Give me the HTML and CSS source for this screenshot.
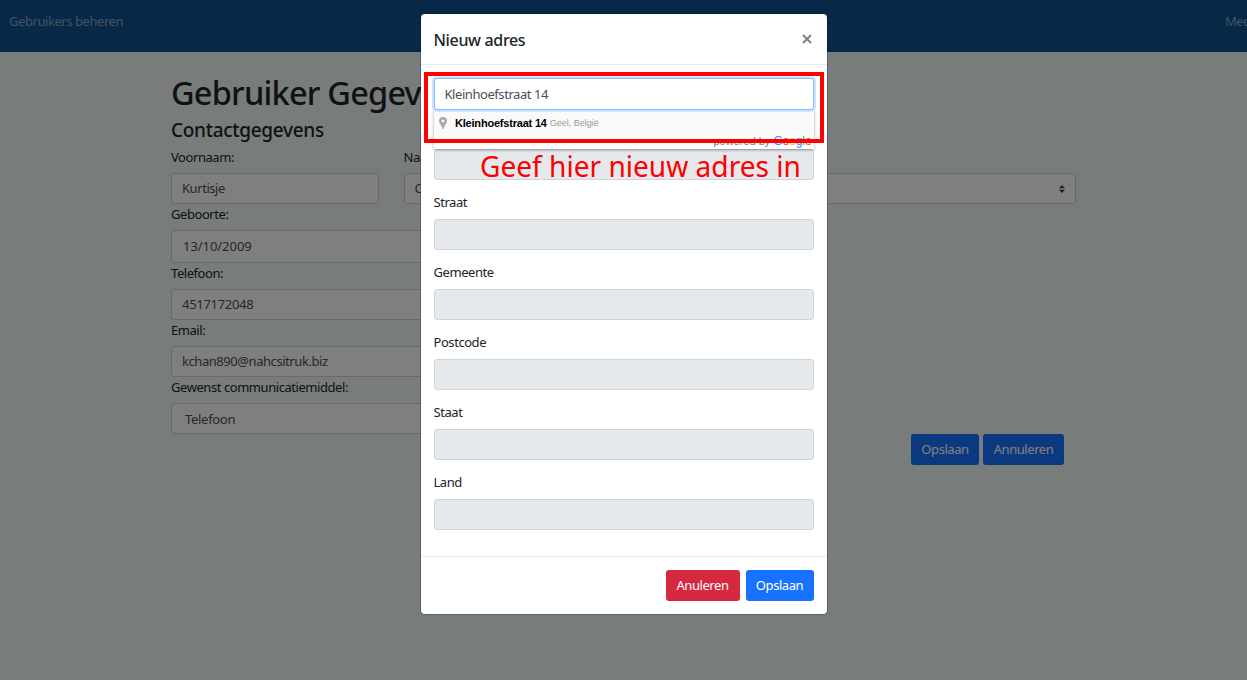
FILE: index.html
```html
<!DOCTYPE html>
<html lang="nl">
<head>
<meta charset="utf-8">
<title>Gebruiker Gegevens</title>
<link rel="stylesheet" href="styles.css">
</head>
<body>
<nav class="navbar"><span>Gebruikers beheren</span><span class="nav-right">Medewerkers</span></nav>
<main class="page">
  <h1>Gebruiker Gegevens</h1>
  <h2>Contactgegevens</h2>
  <div class="row">
    <div><label>Voornaam:</label><div class="control">Kurtisje</div></div>
    <div><label>Naam:</label><div class="control">Chan</div></div>
    <div><label>&nbsp;</label><div class="control select"><svg width="6" height="8" viewBox="0 0 6 8"><path d="M0 3.200 3 0l3 3.200zM0 4.800h6L3 8z" fill="#343a50"/></svg></div></div>
  </div>
  <div class="half">
    <label>Geboorte:</label><div class="control date">13/10/2009</div>
    <label>Telefoon:</label><div class="control phone">4517172048</div>
    <label>Email:</label><div class="control">kchan890@nahcsitruk.biz</div>
    <label>Gewenst communicatiemiddel:</label><div class="control choice">Telefoon</div>
  </div>
  <div class="actions"><span class="btn">Opslaan</span><span class="btn wide">Annuleren</span></div>
</main>
<div class="backdrop">
  <section class="modal">
    <header><h3>Nieuw adres</h3><svg class="close" width="10" height="10" viewBox="0 0 10 10"><path d="m1 1 8 8M9 1 1 9" stroke="#7f7f7f" stroke-width="1.8"/></svg></header>
    <div class="body">
      <div class="control search">Kleinhoefstraat 14</div>
      <div class="suggestions">
        <div class="item"><svg width="8" height="12" viewBox="0 0 8 12"><path fill-rule="evenodd" d="M4 0a4 4 0 0 0-4 4c0 2.400 2.600 3.600 3.400 8h1.200C5.400 7.600 8 6.400 8 4a4 4 0 0 0-4-4zm0 2.500a1.500 1.500 0 1 1 0 3 1.500 1.500 0 0 1 0-3z" fill="#a9a9a9"/></svg><b>Kleinhoefstraat 14</b><small>Geel, België</small></div>
        <div class="powered">powered by <span class="google"><i class="b">G</i><i class="r">o</i><i class="y">o</i><i class="b">g</i><i class="g">l</i><i class="r">e</i></span></div>
      </div>
      <div class="control disabled"></div>
      <label>Straat</label><div class="control disabled"></div>
      <label>Gemeente</label><div class="control disabled"></div>
      <label>Postcode</label><div class="control disabled"></div>
      <label>Staat</label><div class="control disabled"></div>
      <label>Land</label><div class="control disabled"></div>
    </div>
    <footer><span class="btn danger">Anuleren</span><span class="btn save">Opslaan</span></footer>
    <div class="highlight"></div>
    <div class="note">Geef hier nieuw adres in</div>
  </section>
</div>
</body>
</html>
```
FILE: styles.css
```css
* { box-sizing: border-box; }
body { margin: 0; height: 680px; overflow: hidden; background: #f0fbf9; color: #212529; font: 13px/20px "Noto Sans", "Open Sans", sans-serif; letter-spacing: -.44px; }
h1, h2, h3 { margin: 0; font-weight: 500; }
.navbar { height: 52px; background: #10508f; color: #8ba5c0; display: flex; justify-content: space-between; padding: 11px 0 0 9px; overflow: hidden; }
.nav-right { width: 22px; white-space: nowrap; }
.page { width: 905px; margin-left: 171px; padding-top: 20px; }
h1 { font-size: 32.500px; line-height: 42px; letter-spacing: -.8px; }
h2 { font-size: 19px; line-height: 24px; margin-top: 4px; letter-spacing: -.3px; }
label { display: block; height: 26px; }
.row { display: grid; grid-template-columns: 208px 208px 440px; column-gap: 24.5px; margin-top: 5px; }
.control { height: 31px; border: 1px solid #ced4da; border-radius: 3px; background: #fff; padding: 4px 10px; color: #495057; line-height: 20px; }
.select { display: flex; justify-content: flex-end; align-items: center; }
.half { width: 440px; }
.date { height: 33px; padding: 5px 11px; letter-spacing: -.05px; }
.phone { letter-spacing: -.3px; }
.choice { padding: 5px 13px; letter-spacing: -.3px; }
.actions { display: flex; justify-content: flex-end; gap: 4px; padding-right: 12px; }
.btn { display: block; width: 68px; height: 31px; border-radius: 3px; background: #1773ff; color: #fff; text-align: center; line-height: 31px; }
.btn.wide { width: 81px; }
.backdrop { position: absolute; inset: 0; background: rgba(0,0,0,.5); display: flex; justify-content: center; align-items: flex-start; padding-top: 14px; }
.modal { position: relative; width: 406px; height: 600px; background: #fff; border-radius: 4px; box-shadow: 0 0 0 1px rgba(0,0,0,.22); }
header { height: 51px; border-bottom: 1px solid #e9ecef; display: flex; justify-content: space-between; padding: 14px 15px 0 13px; }
h3 { font-size: 16px; line-height: 24px; letter-spacing: -.34px; }
.close { margin-top: 6px; }
.body { height: 491px; padding: 13px 13px 0; }
.body label { height: 39.2px; padding-top: 12.5px; }
.search { height: 32px; padding-top: 5px; border-color: #80bdff; box-shadow: 0 0 0 2px #cbe2ff; position: relative; z-index: 1; }
.suggestions { height: 39px; background: #fff; border-top: 1px solid #d9d9d9; box-shadow: 0 1px 3px rgba(0,0,0,.35); font-family: "Liberation Sans", Arial, sans-serif; letter-spacing: 0; position: relative; }
.item { height: 25px; background: #fafafa; display: flex; align-items: center; padding: 0 5.5px 2px; }
.item b { margin-left: 8px; font-size: 11px; letter-spacing: -.2px; color: #000; white-space: nowrap; }
.item small { margin: 1px 0 0 3px; font-size: 9px; color: #999; }
.powered { height: 11px; line-height: 11px; font-size: 11px; color: #777; text-align: right; padding-right: 2px; }
.google { font-size: 12px; letter-spacing: -.1px; }
.google i { font-style: normal; }
.b { color: #4285f4; } .r { color: #ea4335; } .y { color: #fbbc05; } .g { color: #34a853; }
.body .disabled { height: 30.800px; background: #e5e9ec; }
footer { height: 58px; border-top: 1px solid #e9ecef; padding: 13px; display: flex; justify-content: flex-end; gap: 6px; }
.danger { width: 74px; background: #d62840; }
.highlight { position: absolute; left: 3px; top: 58px; width: 400px; height: 71px; border: 4px solid #f00; z-index: 2; }
.note { position: absolute; left: 59px; top: 132px; font-size: 29.500px; line-height: 40px; color: #f00; white-space: nowrap; letter-spacing: 0; transform: scaleX(.952); transform-origin: left; z-index: 3; }
```
